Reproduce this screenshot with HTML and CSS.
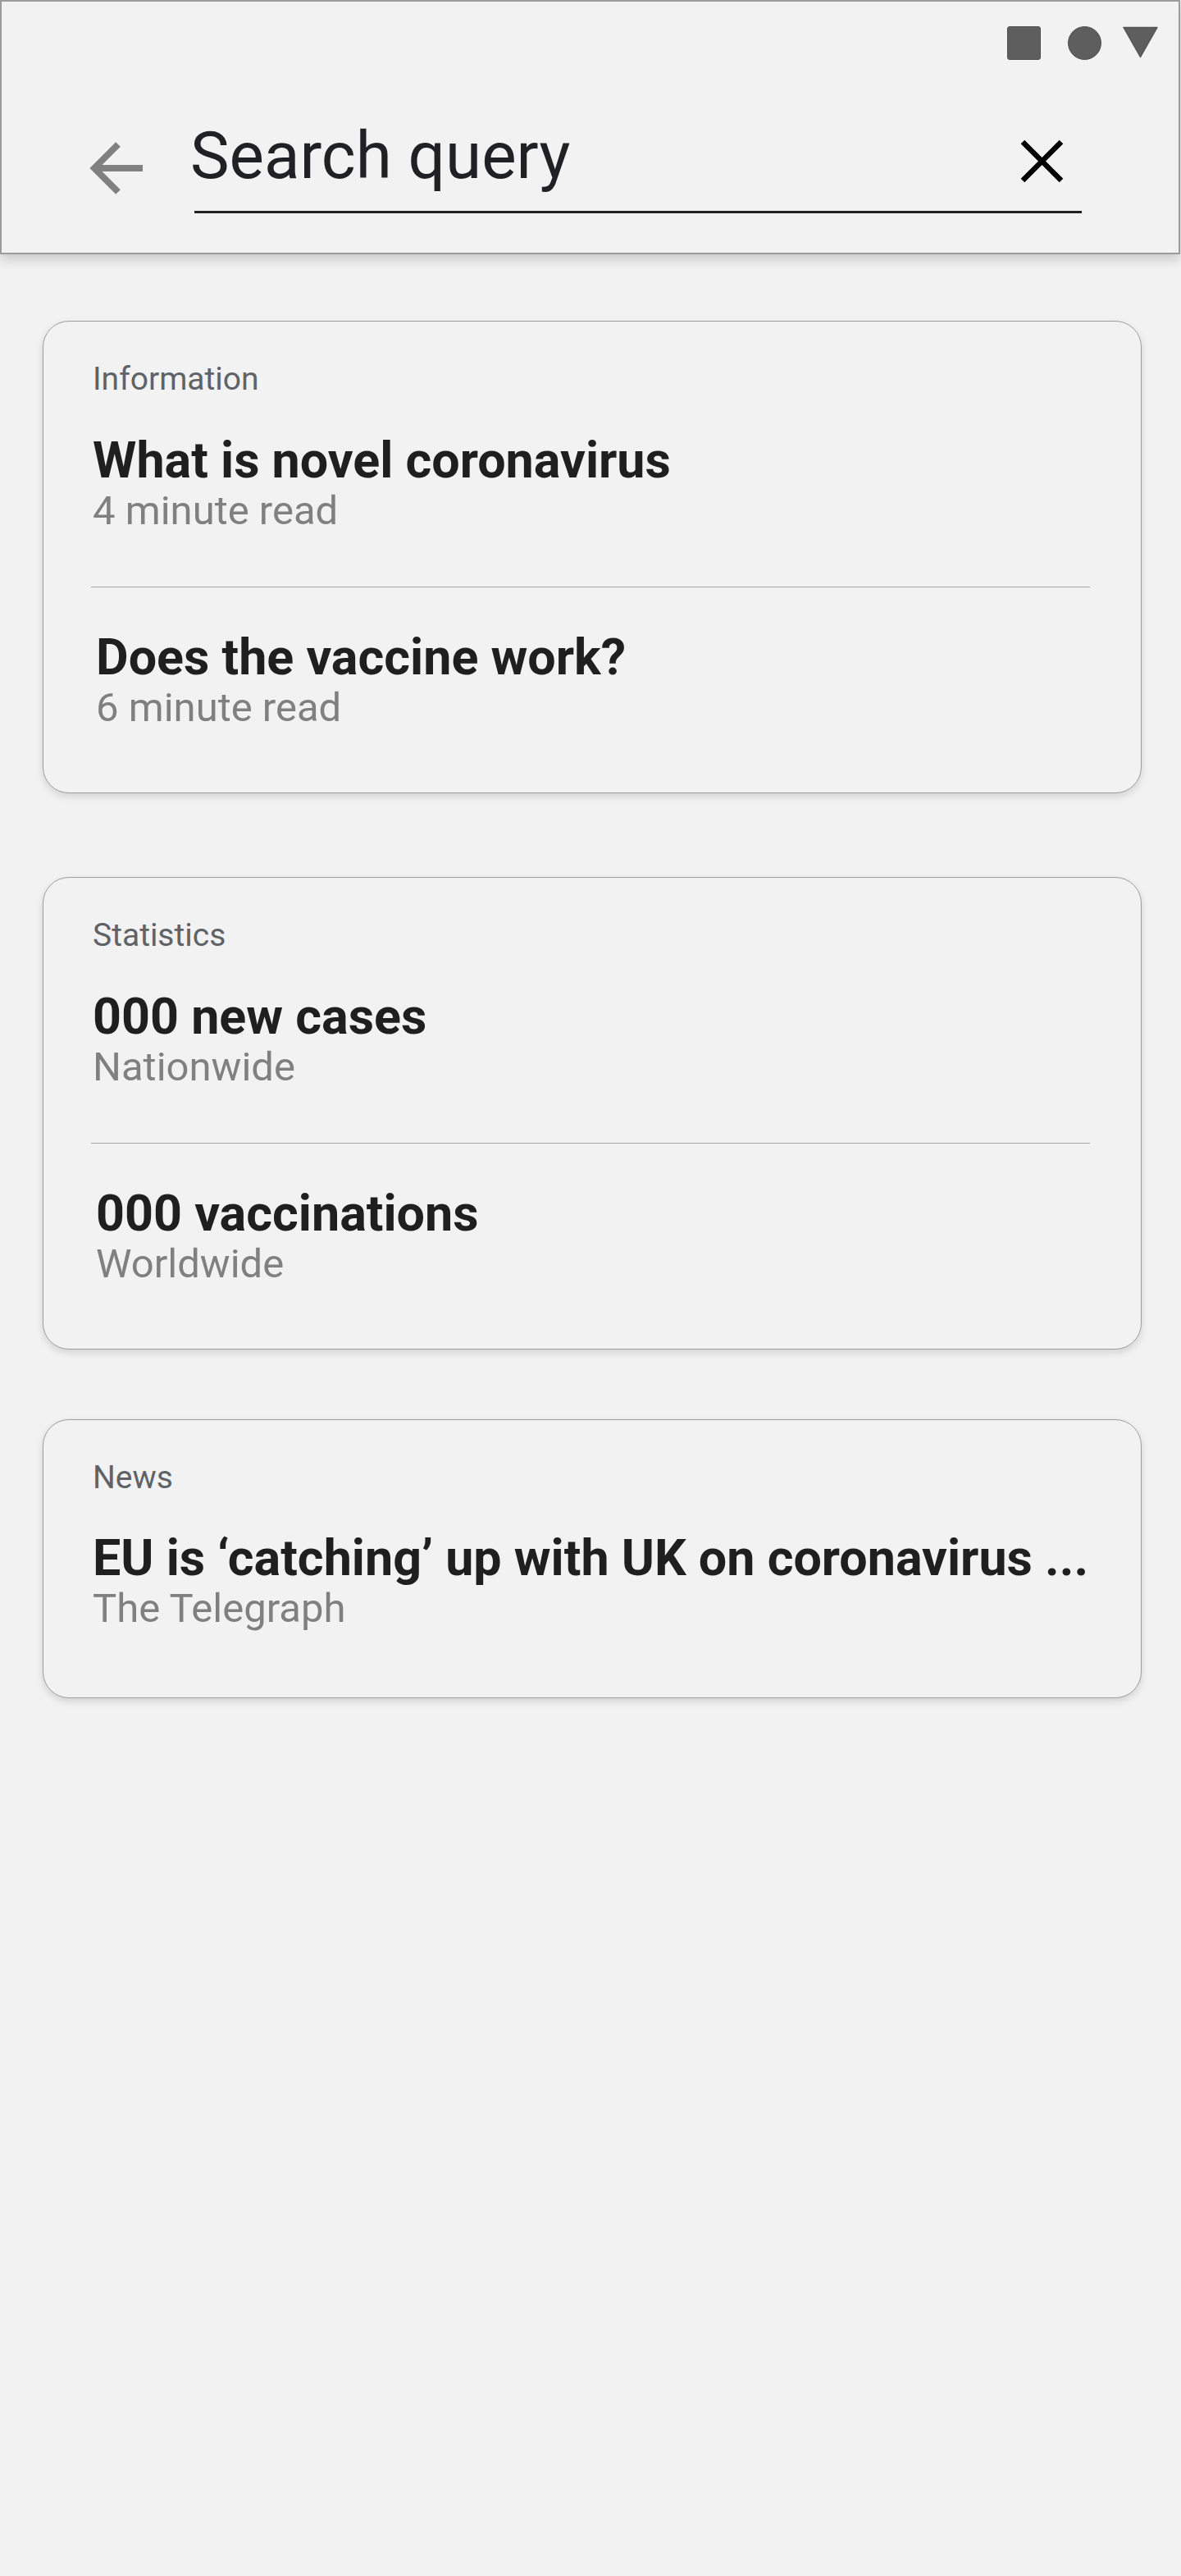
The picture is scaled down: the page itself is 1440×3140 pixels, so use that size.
FILE: index.html
```html
<!DOCTYPE html>
<html lang="en">
<head>
<meta charset="utf-8">
<title>Search</title>
<link rel="stylesheet" href="styles.css">
</head>
<body>
<header class="header">
  <div class="status">
    <span class="st-square"></span>
    <span class="st-circle"></span>
    <svg class="st-tri" width="45" height="39" viewBox="0 0 45 39"><path d="M2 1.5 H43 L22.5 37.5 Z" fill="#5e5e5e" stroke="#555" stroke-width="1.5" stroke-linejoin="round"/></svg>
  </div>
  <div class="search-row">
    <svg class="back" width="66" height="66" viewBox="0 0 66 66"><path d="M36 4 L7 33 L36 62 M7 33 H66" fill="none" stroke="#808080" stroke-width="8"/></svg>
    <div class="field">
      <span class="query">Search query</span>
      <svg class="clear" width="55" height="55" viewBox="0 0 55 55"><path d="M4 4 L51 51 M51 4 L4 51" stroke="#000" stroke-width="6.5"/></svg>
    </div>
  </div>
</header>
<main class="cards">
  <section class="card card-info">
    <div class="label">Information</div>
    <div class="item item-first">
      <div class="title">What is novel coronavirus</div>
      <div class="sub">4 minute read</div>
    </div>
    <div class="divider"></div>
    <div class="item item-second">
      <div class="title">Does the vaccine work?</div>
      <div class="sub">6 minute read</div>
    </div>
  </section>
  <section class="card card-stats">
    <div class="label">Statistics</div>
    <div class="item item-first">
      <div class="title">000 new cases</div>
      <div class="sub">Nationwide</div>
    </div>
    <div class="divider"></div>
    <div class="item item-second">
      <div class="title">000 vaccinations</div>
      <div class="sub">Worldwide</div>
    </div>
  </section>
  <section class="card card-news">
    <div class="label">News</div>
    <div class="item item-news">
      <div class="title">EU is ‘catching’ up with UK on coronavirus ...</div>
      <div class="sub">The Telegraph</div>
    </div>
  </section>
</main>
</body>
</html>
```
FILE: styles.css
```css
* { box-sizing: border-box; }
html, body { margin: 0; padding: 0; }
body {
  background: #f2f2f2;
  font-family: Roboto, "Noto Sans", sans-serif;
  color: #1f1f1f;
  min-height: 3140px;
}
.header {
  position: relative;
  z-index: 1;
  width: 1439px;
  height: 310px;
  background: #f2f2f2;
  border: 2px solid #9c9c9c;
  box-shadow: 0 6px 14px rgba(0, 0, 0, 0.18);
}
.status {
  display: flex;
  justify-content: flex-end;
  align-items: flex-start;
  padding: 30px 24px 0 0;
  height: 71px;
}
.st-square {
  width: 41px;
  height: 41px;
  background: #5e5e5e;
  border: 1px solid #505050;
  border-radius: 3px;
}
.st-circle {
  width: 41px;
  height: 41px;
  margin-left: 33px;
  background: #5e5e5e;
  border: 1px solid #505050;
  border-radius: 50%;
}
.st-tri { margin-left: 25px; }
.search-row {
  display: flex;
  align-items: flex-start;
  padding-left: 106px;
}
.back { margin-top: 99px; flex: none; }
.field {
  margin-left: 63px;
  width: 1082px;
  height: 187px;
  display: flex;
  align-items: flex-end;
  justify-content: space-between;
  border-bottom: 3px solid #222;
}
.query {
  margin-left: -5px;
  margin-bottom: 19px;
  font-size: 80px;
  line-height: 96px;
  color: #202124;
}
.clear { margin: 0 21px 33px 0; flex: none; }

.cards {
  display: flex;
  flex-direction: column;
  padding: 81px 48px 0 52px;
}
.card {
  border: 1px solid #9e9e9e;
  border-radius: 32px;
  background: #f2f2f2;
  box-shadow: 0 4px 10px rgba(0, 0, 0, 0.13);
  padding: 44px 0 0 0;
}
.card-info { height: 576px; }
.card-stats { height: 576px; margin-top: 102px; }
.card-news { height: 340px; margin-top: 85px; }
.label {
  margin-left: 60px;
  font-size: 39px;
  line-height: 52px;
  color: #5f6368;
}
.item { padding-left: 60px; }
.item-first { padding-top: 41px; padding-bottom: 62px; }
.item-second { padding-top: 53px; padding-left: 64px; }
.item-news { padding-top: 40px; padding-right: 40px; }
.title {
  font-size: 61px;
  line-height: 64px;
  font-weight: 700;
  color: #1f1f1f;
  white-space: nowrap;
}
.sub {
  font-size: 49px;
  line-height: 60px;
  color: #808080;
}
.divider {
  margin: 0 62px 0 58px;
  height: 1px;
  background: #a8a8a8;
}
```
